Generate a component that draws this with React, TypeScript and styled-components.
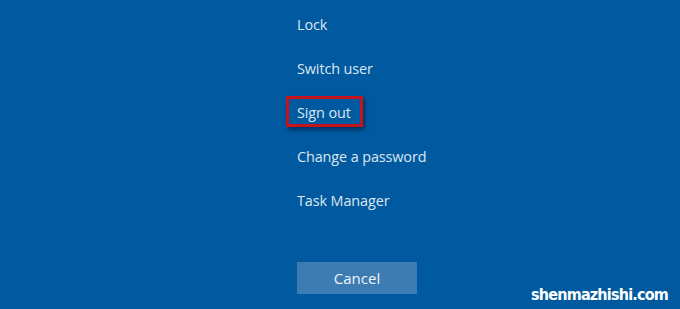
import styled, { createGlobalStyle } from "styled-components";

const GlobalStyle = createGlobalStyle`
  html, body {
    margin: 0;
    padding: 0;
    background: #015a9f;
  }
`;

const items = ["Lock", "Switch user", "Sign out", "Change a password", "Task Manager"];

const App = () => {
  return (
    <Screen>
      <GlobalStyle />
      <Menu>
        {items.map((label) => (
          <Option key={label} $marked={label === "Sign out"}>
            {label}
          </Option>
        ))}
      </Menu>
      <CancelButton>Cancel</CancelButton>
      <Watermark>shenmazhishi.com</Watermark>
    </Screen>
  );
};

export default App;

const Screen = styled.div`
  position: relative;
  width: 680px;
  height: 309px;
  overflow: hidden;
  background: #015a9f;
  font-family: "Open Sans", "Noto Sans", sans-serif;
  color: #dde6f1;
  display: flex;
  flex-direction: column;
  padding-left: 297px;
  box-sizing: border-box;
`;

const Menu = styled.div`
  display: flex;
  flex-direction: column;
  padding-top: 14px;
`;

const Option = styled.div<{ $marked?: boolean }>`
  position: relative;
  height: 44px;
  font-size: 14.4px;
  line-height: 22px;
  letter-spacing: -0.1px;

  &::before {
    content: "";
    display: ${(p) => (p.$marked ? "block" : "none")};
    position: absolute;
    left: -11px;
    top: -6px;
    width: 71px;
    height: 25px;
    border: 3px solid #c5141d;
    box-shadow: 2px 3px 4px rgba(0, 20, 50, 0.55);
  }
`;

const CancelButton = styled.div`
  margin-top: 28px;
  width: 120px;
  height: 32px;
  background: #3d7cb2;
  color: #f1f5fa;
  font-size: 15px;
  display: flex;
  align-items: center;
  justify-content: center;
`;

const Watermark = styled.div`
  position: absolute;
  right: 12px;
  bottom: 5px;
  font-family: "DejaVu Sans Condensed", "DejaVu Sans", sans-serif;
  font-weight: bold;
  font-size: 16px;
  color: #ffffff;
  letter-spacing: -0.8px;
`;
